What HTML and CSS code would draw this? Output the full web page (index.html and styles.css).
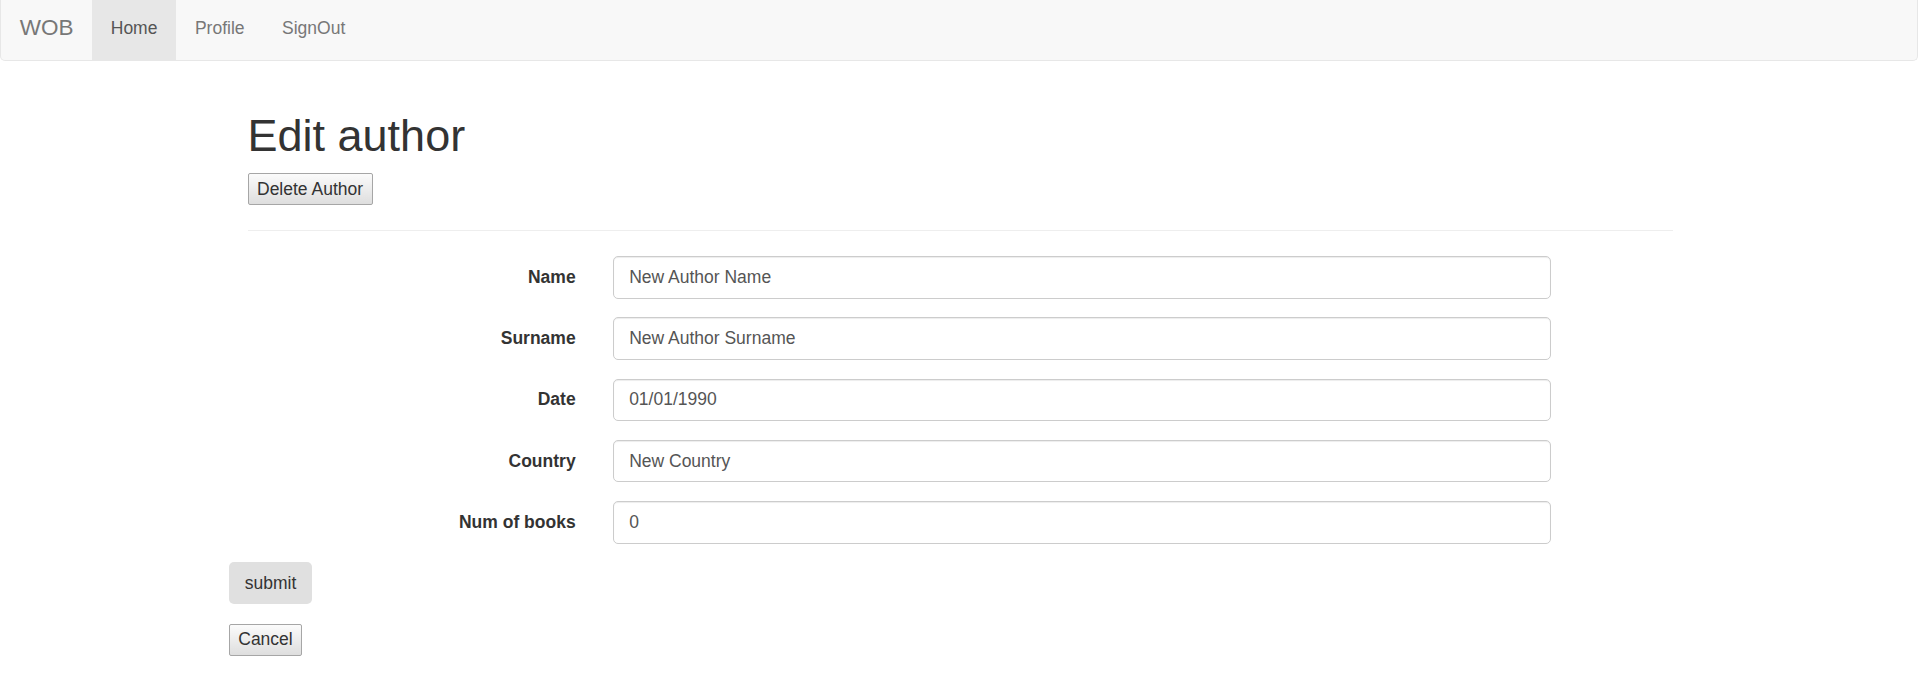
FILE: index.html
```html
<!DOCTYPE html>
<html>
<head>
<meta charset="utf-8">
<title>Edit author</title>
<link rel="stylesheet" href="styles.css">
</head>
<body>
<nav class="navbar">
  <a class="brand" href="#">WOB</a>
  <ul class="nav">
    <li><a class="nav-link active" href="#">Home</a></li>
    <li><a class="nav-link" href="#">Profile</a></li>
    <li><a class="nav-link" href="#">SignOut</a></li>
  </ul>
</nav>
<main class="container">
  <h1 class="title">Edit author</h1>
  <button class="plain-btn" type="button">Delete Author</button>
  <hr class="divider">
  <form class="form">
    <div class="form-group">
      <label class="label">Name</label>
      <div class="field"><input class="input" type="text" value="New Author Name"></div>
    </div>
    <div class="form-group">
      <label class="label">Surname</label>
      <div class="field"><input class="input" type="text" value="New Author Surname"></div>
    </div>
    <div class="form-group">
      <label class="label">Date</label>
      <div class="field"><input class="input" type="text" value="01/01/1990"></div>
    </div>
    <div class="form-group">
      <label class="label">Country</label>
      <div class="field"><input class="input" type="text" value="New Country"></div>
    </div>
    <div class="form-group">
      <label class="label">Num of books</label>
      <div class="field"><input class="input" type="text" value="0"></div>
    </div>
    <button class="submit-btn" type="button">submit</button>
  </form>
  <div class="cancel-row">
    <button class="plain-btn" type="button">Cancel</button>
  </div>
</main>
</body>
</html>
```

FILE: styles.css
```css
* {
  box-sizing: border-box;
}

html, body {
  margin: 0;
  padding: 0;
  background: #ffffff;
}

body {
  font-family: "Liberation Sans", Arial, Helvetica, sans-serif;
  font-size: 17.5px;
  line-height: 25px;
  color: #333333;
  overflow: hidden;
}

.navbar {
  display: flex;
  align-items: stretch;
  height: 61px;
  background: #f8f8f8;
  border: 1px solid #e7e7e7;
  border-top: 0;
  border-radius: 0 0 5px 5px;
  margin: 0 2px 25px 0;
}

.brand {
  display: block;
  width: 91px;
  padding: 14.75px 0 0 18.75px;
  font-size: 22.5px;
  line-height: 25px;
  color: #777777;
  text-decoration: none;
}

.nav {
  display: flex;
  list-style: none;
  margin: 0;
  padding: 0;
}

.nav-link {
  display: block;
  height: 60px;
  padding: 15.5px 18.75px 0;
  line-height: 25px;
  color: #777777;
  text-decoration: none;
}

.nav-link.active {
  background: #e7e7e7;
  color: #555555;
}

.container {
  display: flow-root;
  width: 1462.5px;
  margin: 0 auto;
  padding: 0 18.75px;
}

.title {
  margin: 25px 0 12.5px;
  font-size: 45px;
  line-height: 49.5px;
  font-weight: 500;
  color: #333333;
}

.plain-btn {
  display: inline-block;
  margin: 0;
  padding: 2.5px 8.5px;
  font: inherit;
  font-size: 17.5px;
  line-height: 25px;
  color: #333333;
  background: linear-gradient(#fbfbfb, #dedede);
  border: 1px solid #a6a6a6;
  border-radius: 2px;
}

.divider {
  margin: 25px 0;
  border: 0;
  border-top: 1px solid #eeeeee;
  height: 0;
}

.form {
  margin: 0 -18.75px;
}

.form-group {
  display: grid;
  grid-template-columns: 365.625px 975px;
  margin-bottom: 18.75px;
}

.label {
  padding: 8.75px 18.75px 0;
  text-align: right;
  font-weight: 700;
  color: #333333;
}

.field {
  padding: 0 18.75px;
}

.input {
  display: block;
  width: 100%;
  height: 42.5px;
  margin: 0;
  padding: 7.5px 15px;
  font: inherit;
  font-size: 17.5px;
  line-height: 25px;
  color: #555555;
  background: #ffffff;
  border: 1px solid #cccccc;
  border-radius: 5px;
  box-shadow: inset 0 1px 1px rgba(0, 0, 0, 0.075);
  outline: none;
}

.submit-btn {
  display: inline-block;
  margin: 0;
  padding: 7.5px 15px;
  font: inherit;
  font-size: 17.5px;
  line-height: 25px;
  color: #333333;
  background: #e0e0e0;
  border: 1px solid transparent;
  border-radius: 5px;
}

.cancel-row {
  margin: 19.5px -18.75px 0;
}
```
